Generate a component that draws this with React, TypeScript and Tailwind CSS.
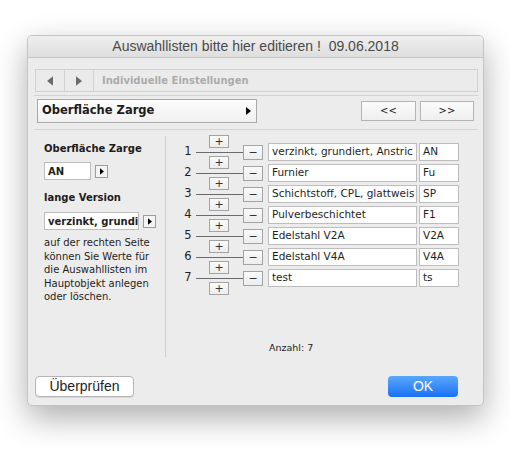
const ui = "font-['DejaVu_Sans',sans-serif]";

const rows = [
  { n: 1, text: 'verzinkt, grundiert, Anstric', code: 'AN' },
  { n: 2, text: 'Furnier', code: 'Fu' },
  { n: 3, text: 'Schichtstoff, CPL, glattweis', code: 'SP' },
  { n: 4, text: 'Pulverbeschichtet', code: 'F1' },
  { n: 5, text: 'Edelstahl V2A', code: 'V2A' },
  { n: 6, text: 'Edelstahl V4A', code: 'V4A' },
  { n: 7, text: 'test', code: 'ts' },
];

// grid tracks are 10.5px: plus buttons sit on the boundaries between rows
const rowPlace = [
  'row-start-2 row-span-2',
  'row-start-4 row-span-2',
  'row-start-6 row-span-2',
  'row-start-8 row-span-2',
  'row-start-10 row-span-2',
  'row-start-12 row-span-2',
  'row-start-14 row-span-2',
];
const plusPlace = [
  'row-start-1 row-span-2',
  'row-start-3 row-span-2',
  'row-start-5 row-span-2',
  'row-start-7 row-span-2',
  'row-start-9 row-span-2',
  'row-start-11 row-span-2',
  'row-start-13 row-span-2',
  'row-start-15 row-span-2',
];

function Tri({ dir = 'right', className = '' }: { dir?: 'left' | 'right'; className?: string }) {
  return (
    <svg width="5" height="8" viewBox="0 0 5 8" className={className}>
      {dir === 'right' ? <path d="M0 0L5 4L0 8Z" fill="currentColor" /> : <path d="M5 0L0 4L5 8Z" fill="currentColor" />}
    </svg>
  );
}

function SmallArrow() {
  return (
    <div className="flex h-[13px] w-[13px] items-center justify-center border border-[#9c9c9c] bg-[#f4f4f4] text-black">
      <Tri className="h-[7px] w-[4px]" />
    </div>
  );
}

function Field({ value, className = '' }: { value: string; className?: string }) {
  return (
    <div className={`flex h-[18px] items-center overflow-hidden whitespace-nowrap border border-[#bdbdbd] bg-white pl-[3px] text-[#1e1e1e] ${className}`}>
      {value}
    </div>
  );
}

function SmallBtn({ label, className = '' }: { label: string; className?: string }) {
  return (
    <div className={`flex w-[20px] items-center justify-center border border-[#a3a3a3] bg-gradient-to-b from-[#fafafa] to-[#ededed] text-[11px] leading-none text-[#333] ${className}`}>
      {label}
    </div>
  );
}

export default function App() {
  return (
    <div className={`min-h-[450px] w-[510px] bg-white pl-[27px] pt-[35px] ${ui}`}>
      <div className="flex h-[371px] w-[457px] flex-col overflow-hidden rounded-[5px] border border-[#c4c4c4] bg-[#ececec] shadow-[0_12px_32px_rgba(0,0,0,0.32)]">
        {/* title bar */}
        <div className="flex h-[22px] shrink-0 items-center justify-center border-b border-[#c6c6c6] bg-gradient-to-b from-[#efefef] to-[#dedede] font-['Liberation_Sans',sans-serif] text-[14px] text-[#4a4a4a]">
          Auswahllisten bitte hier editieren !&nbsp;&nbsp;09.06.2018
        </div>

        <div className="flex flex-1 flex-col pl-[6px] pr-[5px]">
          {/* navigation strip */}
          <div className="ml-px mt-[11px] flex h-[23px] border border-[#d0d0d0] bg-[#ebebeb]">
            <div className="flex w-[29px] items-center justify-center border-r border-[#d0d0d0] text-[#6c6c6c]">
              <Tri dir="left" className="h-[10px] w-[6px]" />
            </div>
            <div className="flex w-[29px] items-center justify-center border-r border-[#d0d0d0] text-[#6c6c6c]">
              <Tri className="h-[10px] w-[6px]" />
            </div>
            <div className="flex items-center pl-[8px] text-[10px] font-bold text-[#ababab]">Individuelle Einstellungen</div>
          </div>
          <div className="mt-[3px] h-px bg-[#d3d3d3]" />

          {/* popup + paging */}
          <div className="mt-[2px] flex h-[25px] items-center">
            <div className="ml-[3px] flex h-[24px] w-[220px] items-center justify-between border border-[#a9a9a9] bg-gradient-to-b from-[#fdfdfd] to-[#f0f0f0] pl-[4px] pr-[5px] text-[11.5px] font-bold text-[#1c1c1c]">
              Oberfläche Zarge
              <Tri className="h-[8px] w-[5px] text-black" />
            </div>
            <div className="ml-auto mr-[4px] flex gap-[4px]">
              <div className="flex h-[20px] w-[55px] items-center justify-center border border-[#b4b4b4] bg-gradient-to-b from-[#fbfbfb] to-[#efefef] text-[10px] text-[#222]">&lt;&lt;</div>
              <div className="flex h-[20px] w-[54px] items-center justify-center border border-[#b4b4b4] bg-gradient-to-b from-[#fbfbfb] to-[#efefef] text-[10px] text-[#222]">&gt;&gt;</div>
            </div>
          </div>
          <div className="mt-[6px] h-px bg-[#d3d3d3]" />

          {/* main area */}
          <div className="flex h-[227px]">
            <div className="flex w-[131px] flex-col pl-[10px] pt-[12px]">
              <div className="text-[10px] font-bold leading-[14px] text-[#1c1c1c]">Oberfläche Zarge</div>
              <div className="mt-[6px] flex items-center gap-[4px]">
                <Field value="AN" className="w-[47px] text-[10px] font-bold" />
                <SmallArrow />
              </div>
              <div className="mt-[11px] text-[10px] font-bold leading-[14px] text-[#1c1c1c]">lange Version</div>
              <div className="mt-[7px] flex items-center gap-[4px]">
                <Field value="verzinkt, grundi" className="w-[95px] text-[10px] font-bold" />
                <SmallArrow />
              </div>
              <p className="mt-[6px] text-[10px] leading-[13.5px] text-[#1e1e1e]">
                auf der rechten Seite können Sie Werte für die Auswahllisten im Hauptobjekt anlegen oder löschen.
              </p>
            </div>
            <div className="mt-[6px] w-px bg-[#cfcfcf]" />

            <div className="flex flex-1 flex-col pl-[16px] pt-px">
              <div className="grid w-[277px] grid-rows-[repeat(16,10.5px)]">
                {rows.map((r, i) => (
                  <div key={r.n} className={`col-start-1 flex items-center ${rowPlace[i]}`}>
                    <div className="w-[12px] text-center text-[11.5px] leading-none text-[#1e1e1e]">{r.n}</div>
                    <div className="ml-[2px] h-px flex-1 bg-[#6a6a6a]" />
                    <SmallBtn label="−" className="h-[15px]" />
                    <Field value={r.text} className="ml-[5px] w-[149px] text-[10.5px]" />
                    <Field value={r.code} className="ml-[2px] w-[40px] text-[10.5px]" />
                  </div>
                ))}
                {plusPlace.map((p) => (
                  <div key={p} className={`col-start-1 flex items-center ${p}`}>
                    <SmallBtn label="+" className="ml-[27px] h-[13px]" />
                  </div>
                ))}
              </div>
              <div className="ml-[87px] mt-[43px] text-[9.5px] leading-[12px] text-[#222]">Anzahl: 7</div>
            </div>
          </div>

          {/* footer buttons */}
          <div className="mt-[19px] flex items-center font-['Liberation_Sans',sans-serif]">
            <div className="ml-px flex h-[21px] w-[99px] items-center justify-center rounded-[4px] border border-[#b5b5b5] bg-white text-[14px] text-[#1e1e1e] shadow-[0_1px_0_rgba(0,0,0,0.08)]">
              Überprüfen
            </div>
            <div className="ml-auto mr-[20px] flex h-[21px] w-[70px] items-center justify-center rounded-[4px] bg-gradient-to-b from-[#5aa7fb] to-[#1770f5] text-[14px] text-white">
              OK
            </div>
          </div>
        </div>
      </div>
    </div>
  );
}
